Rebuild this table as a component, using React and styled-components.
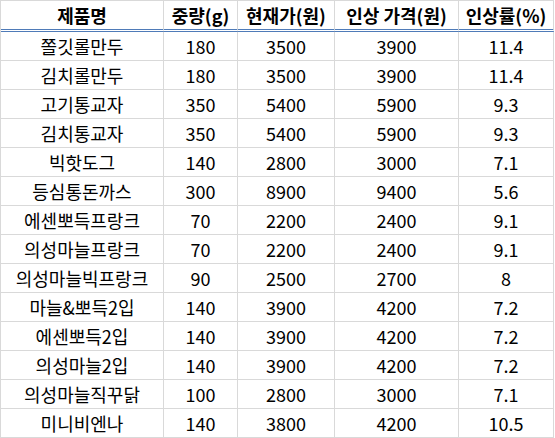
import React from "react";
import styled, { createGlobalStyle } from "styled-components";

const Global = createGlobalStyle`
  html, body { margin: 0; padding: 0; background: #ffffff; }
  body { font-family: "Noto Sans CJK KR", "Noto Sans", sans-serif; color: #000; }
`;

const Table = styled.table`
  border-collapse: separate;
  border-spacing: 0;
  border-top: 1px solid #d9d9d9;
  border-left: 1px solid #d9d9d9;
  table-layout: fixed;
  width: 554px;
  font-family: "Noto Sans CJK KR", sans-serif;
  font-size: 18px;
`;

const Col = styled.col`
  width: ${(p) => p.$w}px;
`;

const Th = styled.th`
  height: 28px;
  padding: 0;
  font-weight: 700;
  text-align: center;
  vertical-align: middle;
  line-height: 28px;
  white-space: nowrap;
  border-right: 1px solid #d9d9d9;
  border-bottom: 3px double #4f7bb8;
`;

const Td = styled.td`
  height: 28px;
  padding: 0;
  text-align: center;
  vertical-align: middle;
  line-height: 28px;
  white-space: nowrap;
  border-right: 1px solid #d9d9d9;
  border-bottom: 1px solid #d9d9d9;
`;

const widths = [163, 74, 97, 124, 95];
const headers = ["제품명", "중량(g)", "현재가(원)", "인상 가격(원)", "인상률(%)"];
const rows = [
  ["쫄깃롤만두", 180, 3500, 3900, "11.4"],
  ["김치롤만두", 180, 3500, 3900, "11.4"],
  ["고기통교자", 350, 5400, 5900, "9.3"],
  ["김치통교자", 350, 5400, 5900, "9.3"],
  ["빅핫도그", 140, 2800, 3000, "7.1"],
  ["등심통돈까스", 300, 8900, 9400, "5.6"],
  ["에센뽀득프랑크", 70, 2200, 2400, "9.1"],
  ["의성마늘프랑크", 70, 2200, 2400, "9.1"],
  ["의성마늘빅프랑크", 90, 2500, 2700, "8"],
  ["마늘&뽀득2입", 140, 3900, 4200, "7.2"],
  ["에센뽀득2입", 140, 3900, 4200, "7.2"],
  ["의성마늘2입", 140, 3900, 4200, "7.2"],
  ["의성마늘직꾸닭", 100, 2800, 3000, "7.1"],
  ["미니비엔나", 140, 3800, 4200, "10.5"],
];

export default function App() {
  return (
    <>
      <Global />
      <Table>
        <colgroup>
          {widths.map((w, i) => (
            <Col key={i} $w={w} />
          ))}
        </colgroup>
        <thead>
          <tr>
            {headers.map((h) => (
              <Th key={h}>{h}</Th>
            ))}
          </tr>
        </thead>
        <tbody>
          {rows.map((r) => (
            <tr key={r[0]}>
              {r.map((c, i) => (
                <Td key={i}>{c}</Td>
              ))}
            </tr>
          ))}
        </tbody>
      </Table>
    </>
  );
}
